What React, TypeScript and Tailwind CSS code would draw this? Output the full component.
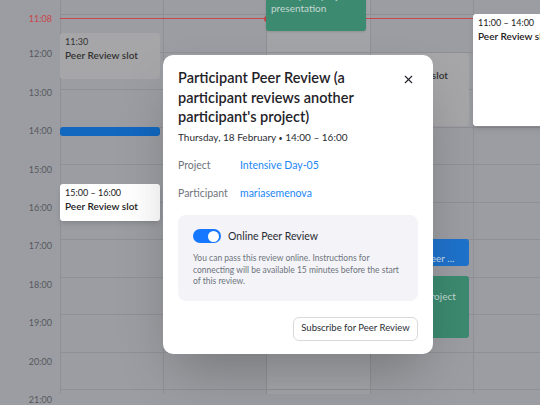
import { X } from "lucide-react";

const hours = ["12:00", "13:00", "14:00", "15:00", "16:00", "17:00", "18:00", "19:00", "20:00", "21:00"];
const lines = Array.from({ length: 11 });

function Slot({ time, title, top, height, left, width, light }: { time: string; title: string; top: number; height: number; left: number; width: number; light?: boolean }) {
  return (
    <div
      className={`absolute rounded-[3px] px-[5px] pt-[3px] ${light ? "bg-white shadow-md text-[#222]" : "bg-[#a6a6a8] text-[#333]"}`}
      style={{ top, height, left, width }}
    >
      <div className="text-[9px] leading-[12px]">{time}</div>
      <div className="text-[10px] leading-[14px] font-semibold whitespace-nowrap">{title}</div>
    </div>
  );
}

export default function App() {
  return (
    <div className="relative w-[540px] h-[405px] overflow-hidden bg-[#9c9da2] font-['Lato',sans-serif]">
      <div className="flex h-full">
        {/* time column */}
        <div className="relative w-[60px] shrink-0 pt-[35px]">
          <div className="absolute right-[8px] top-[12px] text-[9px] text-[#c9454c]">11:08</div>
          {hours.map((h) => (
            <div key={h} className="h-[38.4px] flex items-center justify-end pr-[8px] text-[9px] text-[#55585e]">
              {h}
            </div>
          ))}
        </div>

        {/* grid */}
        <div className="relative flex-1">
          <div className="absolute inset-x-0 top-0 h-[394px] flex">
            <div className="w-[103px] shrink-0 border-l border-[#8f9095]" />
            <div className="w-[103px] shrink-0 border-l border-[#8f9095]" />
            <div className="w-[104px] shrink-0 border-l border-[#8f9095] bg-[#a3a4a8]" />
            <div className="w-[103px] shrink-0 border-l border-[#8f9095]" />
            <div className="w-[103px] shrink-0 border-l border-[#8f9095]" />
          </div>
          <div className="absolute inset-x-0 top-[14px] flex flex-col">
            {lines.map((_, i) => (
              <div key={i} className="h-[37.5px] border-t border-[#8f9095]" />
            ))}
          </div>

          {/* now line */}
          <div className="absolute left-0 right-0 top-[18px] h-px bg-[#c9454c]" />
          <div className="absolute left-[204px] top-[15.5px] w-[6px] h-[6px] rounded-full bg-[#c9454c]" />

          {/* column 1 */}
          <Slot time="11:30" title="Peer Review slot" top={33} height={46} left={0} width={100} />
          <div className="absolute left-0 top-[127px] w-[100px] h-[9px] rounded-[3px] bg-[#1267bf]" />
          <Slot time="15:00 – 16:00" title="Peer Review slot" top={184} height={37} left={0} width={100} light />

          {/* column 3 */}
          <div className="absolute left-[206px] top-[-16px] w-[100px] h-[47px] rounded-[3px] bg-[#3c8a70] px-[5px] pt-[5px] text-[10px] leading-[13px] text-[#c4d8d0] shadow-sm">
            Participant project
            <br />
            presentation
          </div>

          {/* column 4 */}
          <Slot time="11:30 – 14:00" title="Peer Review slot" top={53} height={73} left={310} width={99} />
          <div className="absolute left-[310px] top-[239px] w-[99px] h-[27px] rounded-[3px] bg-[#1e72cb] px-[5px] pt-[13px] text-[10px] leading-[13px] text-[#c9dcf0]">
            <div className="whitespace-nowrap">Participant Peer ...</div>
          </div>
          <div className="absolute left-[310px] top-[276px] w-[99px] h-[62px] rounded-[3px] bg-[#3c8a70] px-[5px] pt-[14px] text-[10px] leading-[13px] text-[#c4d8d0]">
            <div className="whitespace-nowrap">Participant project</div>
            <div>presentation</div>
          </div>

          {/* column 5 */}
          <Slot time="11:00 – 14:00" title="Peer Review slot" top={14} height={112} left={413} width={100} light />
        </div>
      </div>

      {/* modal */}
      <div className="absolute left-[163px] top-[55px] w-[270px] h-[299px] rounded-[10px] bg-white shadow-2xl px-[15px] pt-[13px] flex flex-col">
        <div className="flex items-start justify-between">
          <h2 className="w-[220px] text-[14.5px] leading-[19.5px] font-semibold text-[#1f2329]">
            Participant Peer Review (a participant reviews another participant's project)
          </h2>
          <X className="mt-[5px] mr-[3px] w-[13px] h-[13px] text-[#1f2329]" strokeWidth={2} />
        </div>
        <div className="mt-[3px] h-[14px] text-[10px] leading-[14px] text-[#2a2d33]">
          Thursday, 18 February <span className="text-[7px] leading-none">•</span> 14:00 – 16:00
        </div>

        <div className="mt-[14px] flex flex-col gap-[14px] text-[10.5px] leading-[14px]">
          <div className="flex">
            <span className="w-[62px] text-[#6f747c]">Project</span>
            <span className="text-[#2187f5]">Intensive Day-05</span>
          </div>
          <div className="flex">
            <span className="w-[62px] text-[#6f747c]">Participant</span>
            <span className="text-[#2187f5]">mariasemenova</span>
          </div>
        </div>

        <div className="mt-[15px] rounded-[8px] bg-[#f3f3f8] px-[15px] pt-[14px] h-[86px]">
          <div className="flex items-center gap-[7px]">
            <div className="w-[28px] h-[14px] rounded-full bg-[#1677ff] flex items-center justify-end pr-[2px]">
              <div className="w-[11px] h-[11px] rounded-full bg-white" />
            </div>
            <span className="text-[10.5px] text-[#2a2d33]">Online Peer Review</span>
          </div>
          <p className="mt-[9px] text-[8.5px] leading-[11.5px] text-[#6f747c]">
            You can pass this review online. Instructions for connecting will be available 15 minutes before the start of this review.
          </p>
        </div>

        <div className="mt-[16px] flex justify-end">
          <button className="h-[24px] w-[125px] rounded-[6px] border border-[#d9d9de] bg-white text-[9.5px] text-[#2a2d33]">
            Subscribe for Peer Review
          </button>
        </div>
      </div>
    </div>
  );
}
